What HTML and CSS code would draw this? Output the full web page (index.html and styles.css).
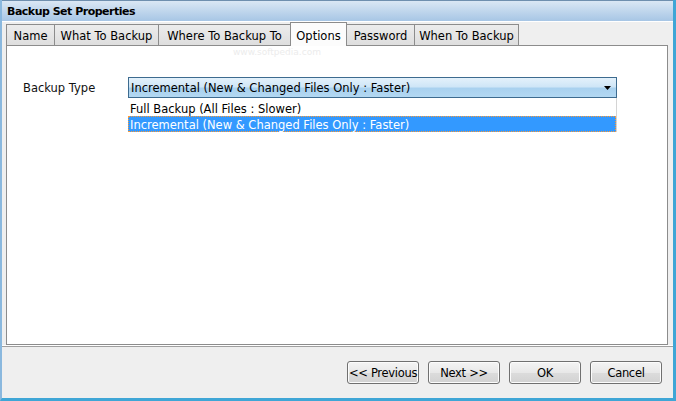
FILE: index.html
```html
<!DOCTYPE html>
<html>
<head>
<meta charset="utf-8">
<link rel="stylesheet" href="styles.css">
</head>
<body>
<div class="window">
  <div class="titlebar">Backup Set Properties</div>
  <div class="main">
    <div class="tabs">
      <div class="tab t-name">Name</div>
      <div class="tab t-what">What To Backup</div>
      <div class="tab t-where">Where To Backup To</div>
      <div class="tab active t-opt">Options</div>
      <div class="tab t-pwd">Password</div>
      <div class="tab t-when">When To Backup</div>
    </div>
    <div class="panel">
      <div class="watermark">www.softpedia.com</div>
      <div class="row">
        <div class="label">Backup Type</div>
        <div class="combo">
          <div class="select">
            <span>Incremental (New &amp; Changed Files Only : Faster)</span>
            <svg class="arrow" width="7" height="4" viewBox="0 0 7 4"><path d="M0 0H7L3.5 4Z" fill="#000"/></svg>
          </div>
          <div class="list">
            <div class="item">Full Backup (All Files : Slower)</div>
            <div class="item selected">Incremental (New &amp; Changed Files Only : Faster)</div>
          </div>
        </div>
      </div>
    </div>
    <div class="footer">
      <div class="btn">&lt;&lt; Previous</div>
      <div class="btn">Next &gt;&gt;</div>
      <div class="btn">OK</div>
      <div class="btn">Cancel</div>
    </div>
  </div>
</div>
</body>
</html>
```

FILE: styles.css
```css
html, body {
  margin: 0;
  padding: 0;
  width: 676px;
  height: 401px;
  overflow: hidden;
  background: #efefef;
}
.window {
  box-sizing: border-box;
  width: 676px;
  height: 401px;
  display: flex;
  flex-direction: column;
  border-left: 2px solid #8ab8de;
  border-right: 3px solid #3fa6d6;
  border-bottom: 3px solid #3fa6d6;
  font-family: "DejaVu Sans", Verdana, sans-serif;
  font-size: 11.5px;
  color: #000;
}
.titlebar {
  height: 21px;
  line-height: 22px;
  padding-left: 5px;
  font-weight: bold;
  font-size: 11px;
  letter-spacing: -0.5px;
  background: linear-gradient(#dae7f4, #a7c6e5);
  border-top: 1px solid #6f8fae;
  box-sizing: border-box;
}
.main {
  flex: 1;
  display: flex;
  flex-direction: column;
  background: #efefef;
  border-top: 1px solid #ffffff;
}
.tabs {
  display: flex;
  align-items: flex-end;
  padding: 0 0 0 4px;
  height: 23px;
  position: relative;
  z-index: 2;
}
.tab {
  box-sizing: border-box;
  height: 21px;
  line-height: 23px;
  text-align: center;
  white-space: nowrap;
  background: linear-gradient(#ececec, #dedede);
  border: 1px solid #8c8c8c;
  border-bottom: none;
  border-right: none;
}
.t-name { width: 48px; }
.t-what { width: 104px; }
.t-where { width: 132px; }
.t-opt { width: 57px; }
.t-pwd { width: 67px; }
.t-when { width: 105px; border-right: 1px solid #8c8c8c; }
.tab.active {
  height: 24px;
  line-height: 26px;
  background: #fcfcfc;
  margin-bottom: -1px;
  border-right: 1px solid #8c8c8c;
}
.tab.active + .tab { border-left: none; }
.panel {
  position: relative;
  flex: 1;
  margin: 0 5px 0 4px;
  background: #fff;
  border: 1px solid #8c8c8c;
}
.watermark {
  position: absolute;
  left: 226px;
  top: 1px;
  font-size: 9px;
  color: #ececec;
}
.row {
  display: flex;
  align-items: flex-start;
  padding: 31px 0 0 16px;
}
.label {
  width: 105px;
  line-height: 23px;
  color: #111;
}
.combo {
  width: 489px;
}
.select {
  box-sizing: border-box;
  height: 21px;
  display: flex;
  align-items: center;
  justify-content: space-between;
  padding: 1px 5px 0 2px;
  border: 1px solid #3d6b8f;
  background: linear-gradient(#e4f1fb 0%, #cfe6f7 45%, #a9d1ef 55%, #b3d8f2 100%);
}
.arrow { margin-top: 0; }
.list {
  background: #fff;
  border-right: 1px solid #d4d4d4;
  padding-top: 1px;
}
.item {
  box-sizing: border-box;
  height: 17px;
  line-height: 18px;
  padding-left: 1px;
  border: 1px dotted transparent;
}
.item.selected {
  background: #3399ff;
  color: #fff;
  border-color: #ff9a33;
  height: 16px;
  line-height: 16px;
}
.footer {
  height: 53px;
  display: flex;
  justify-content: flex-end;
  align-items: flex-start;
  gap: 9px;
  padding: 15px 11px 0 0;
  box-sizing: border-box;
  border-top: 1px solid #ffffff;
  box-shadow: inset 0 1px 0 #a0a0a0;
}
.btn {
  box-sizing: border-box;
  width: 72px;
  height: 23px;
  line-height: 23px;
  text-align: center;
  white-space: nowrap;
  letter-spacing: -0.3px;
  border: 1px solid #707070;
  border-radius: 3px;
  background: linear-gradient(#f4f4f4, #e8e8e8 50%, #dcdcdc 51%, #d2d2d2);
  box-shadow: inset 0 0 0 1px #fcfcfc;
}
```
